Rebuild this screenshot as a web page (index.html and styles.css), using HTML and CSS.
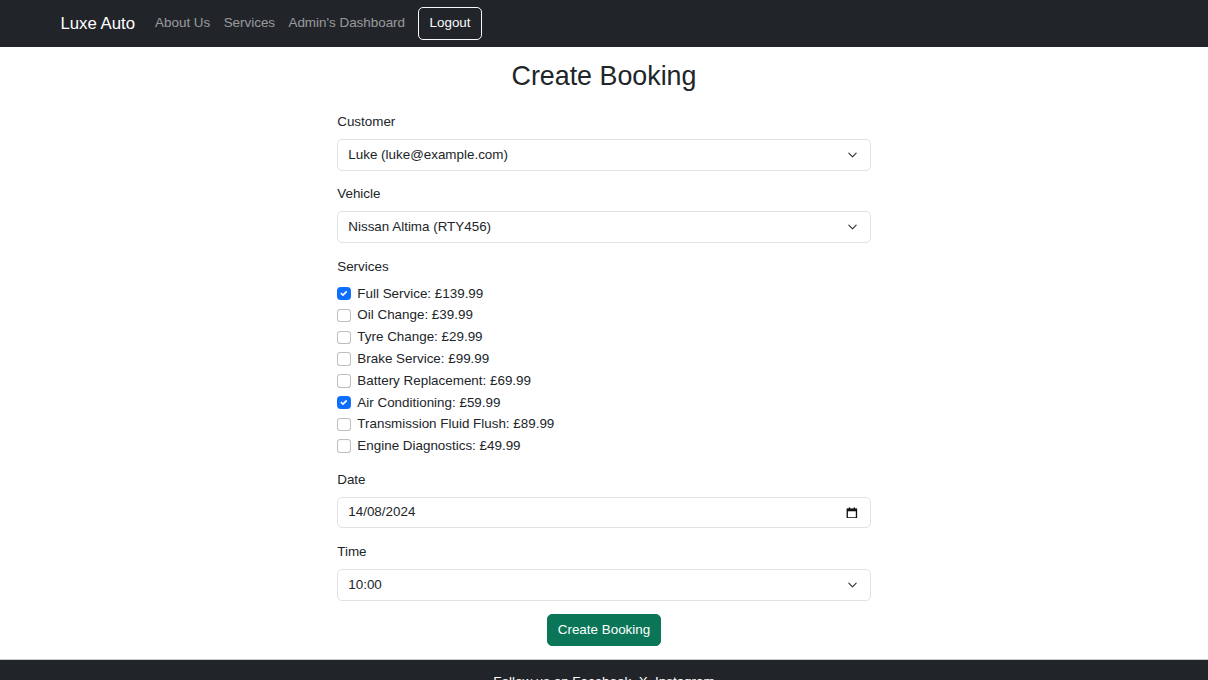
FILE: index.html
```html
<!DOCTYPE html>
<html lang="en">
<head>
<meta charset="utf-8">
<title>Create Booking - Luxe Auto</title>
<link rel="stylesheet" href="styles.css">
</head>
<body>
<div class="page">
  <nav class="navbar">
    <div class="container nav-inner">
      <a class="brand" href="#">Luxe Auto</a>
      <ul class="nav-links">
        <li><a class="nav-link" href="#">About Us</a></li>
        <li><a class="nav-link" href="#">Services</a></li>
        <li><a class="nav-link" href="#">Admin's Dashboard</a></li>
        <li><button class="btn btn-outline-light" type="button">Logout</button></li>
      </ul>
    </div>
  </nav>

  <main class="container main">
    <div class="form-col">
      <h2 class="title">Create Booking</h2>
      <form class="booking-form">
        <div class="field">
          <label class="form-label" for="customer">Customer</label>
          <select class="form-select" id="customer">
            <option>Luke (luke@example.com)</option>
          </select>
        </div>
        <div class="field">
          <label class="form-label" for="vehicle">Vehicle</label>
          <select class="form-select" id="vehicle">
            <option>Nissan Altima (RTY456)</option>
          </select>
        </div>
        <div class="field">
          <label class="form-label">Services</label>
          <div class="form-check"><input class="check" type="checkbox" id="s1" checked><label for="s1">Full Service: £139.99</label></div>
          <div class="form-check"><input class="check" type="checkbox" id="s2"><label for="s2">Oil Change: £39.99</label></div>
          <div class="form-check"><input class="check" type="checkbox" id="s3"><label for="s3">Tyre Change: £29.99</label></div>
          <div class="form-check"><input class="check" type="checkbox" id="s4"><label for="s4">Brake Service: £99.99</label></div>
          <div class="form-check"><input class="check" type="checkbox" id="s5"><label for="s5">Battery Replacement: £69.99</label></div>
          <div class="form-check"><input class="check" type="checkbox" id="s6" checked><label for="s6">Air Conditioning: £59.99</label></div>
          <div class="form-check"><input class="check" type="checkbox" id="s7"><label for="s7">Transmission Fluid Flush: £89.99</label></div>
          <div class="form-check"><input class="check" type="checkbox" id="s8"><label for="s8">Engine Diagnostics: £49.99</label></div>
        </div>
        <div class="field">
          <label class="form-label">Date</label>
          <div class="form-control date-control">
            <span>14/08/2024</span>
            <svg class="cal" width="14" height="14" viewBox="0 0 14 14" aria-hidden="true">
              <rect x="1.5" y="2.5" width="11" height="10.5" fill="none" stroke="#111" stroke-width="1.6"/>
              <rect x="1.5" y="2.5" width="11" height="2.6" fill="#111"/>
              <rect x="3.3" y="0.5" width="1.6" height="2.5" fill="#111"/>
              <rect x="9.1" y="0.5" width="1.6" height="2.5" fill="#111"/>
            </svg>
          </div>
        </div>
        <div class="field">
          <label class="form-label" for="time">Time</label>
          <select class="form-select" id="time">
            <option>10:00</option>
          </select>
        </div>
        <div class="actions">
          <button class="btn btn-success" type="button">Create Booking</button>
        </div>
      </form>
    </div>
  </main>

  <footer class="footer">
    <p>Follow us on <a href="#">Facebook</a>, <a href="#">X</a>, <a href="#">Instagram</a></p>
  </footer>
</div>
</body>
</html>
```

FILE: styles.css
```css
* { box-sizing: border-box; }
html, body { margin: 0; padding: 0; }
body {
  font-family: "Liberation Sans", Arial, sans-serif;
  font-size: 16px;
  line-height: 1.5;
  color: #212529;
  background: #fff;
}
.page { zoom: 0.83889; }

.container {
  width: 100%;
  max-width: 1320px;
  margin: 0 auto;
  padding: 0 12px;
}

/* navbar */
.navbar {
  background: #212529;
  padding: 8px 0;
}
.nav-inner {
  display: flex;
  align-items: center;
}
.brand {
  color: #fff;
  font-size: 20px;
  padding: 5px 0;
  margin-right: 16px;
  text-decoration: none;
  line-height: 30px;
}
.nav-links {
  display: flex;
  align-items: center;
  list-style: none;
  margin: 0;
  padding: 0;
}
.nav-link {
  display: block;
  padding: 8px;
  color: rgba(255,255,255,0.55);
  text-decoration: none;
}

.btn {
  display: inline-block;
  font-family: inherit;
  font-size: 16px;
  line-height: 1.5;
  padding: 6px 12px;
  border-radius: 6px;
  border: 1px solid transparent;
  cursor: pointer;
}
.btn-outline-light {
  color: #f8f9fa;
  background: transparent;
  border-color: #f8f9fa;
  margin-left: 8px;
}
.btn-success {
  color: #fff;
  background: #0b7657;
  border-color: #0b7657;
}

/* main */
.main { padding-top: 16px; }
.form-col {
  width: 636px;
  margin: 0 auto;
}
.title {
  margin: 0 0 23px;
  font-size: 32px;
  font-weight: 400;
  line-height: 1.2;
  text-align: center;
}
.field { margin-bottom: 16px; }
.form-label {
  display: inline-block;
  margin-bottom: 8px;
}
.form-select, .form-control {
  display: block;
  width: 100%;
  font-family: inherit;
  font-size: 16px;
  line-height: 1.5;
  color: #212529;
  background-color: #fff;
  border: 1px solid #dee2e6;
  border-radius: 6px;
  padding: 6px 12px;
}
.form-select {
  appearance: none;
  -webkit-appearance: none;
  padding-right: 36px;
  background-image: url("data:image/svg+xml,%3csvg xmlns='http://www.w3.org/2000/svg' viewBox='0 0 16 16'%3e%3cpath fill='none' stroke='%23343a40' stroke-linecap='round' stroke-linejoin='round' stroke-width='2' d='m2 5 6 6 6-6'/%3e%3c/svg%3e");
  background-repeat: no-repeat;
  background-position: right 12px center;
  background-size: 16px 12px;
}
.date-control {
  display: flex;
  align-items: center;
  justify-content: space-between;
  height: 38px;
}
.cal { margin-right: 2px; }

.form-check {
  display: flex;
  align-items: flex-start;
  min-height: 24px;
  margin-bottom: 2px;
}
.check {
  appearance: none;
  -webkit-appearance: none;
  flex: none;
  width: 16px;
  height: 16px;
  margin: 4px 8px 0 0;
  border: 1px solid rgba(0,0,0,0.25);
  border-radius: 4px;
  background-color: #fff;
  background-repeat: no-repeat;
  background-position: center;
  background-size: contain;
}
.check:checked {
  background-color: #0d6efd;
  border-color: #0d6efd;
  background-image: url("data:image/svg+xml,%3csvg xmlns='http://www.w3.org/2000/svg' viewBox='0 0 20 20'%3e%3cpath fill='none' stroke='%23fff' stroke-linecap='round' stroke-linejoin='round' stroke-width='3' d='m6 10 3 3 6-6'/%3e%3c/svg%3e");
}

.actions {
  text-align: center;
  margin-bottom: 15px;
}

/* footer */
.footer {
  background: #212529;
  color: #fff;
  text-align: center;
  padding: 14px 0;
  border-top: 1px solid #c9c9c9;
}
.footer p { margin: 0; }
.footer a { color: #fff; text-decoration: none; }
```
